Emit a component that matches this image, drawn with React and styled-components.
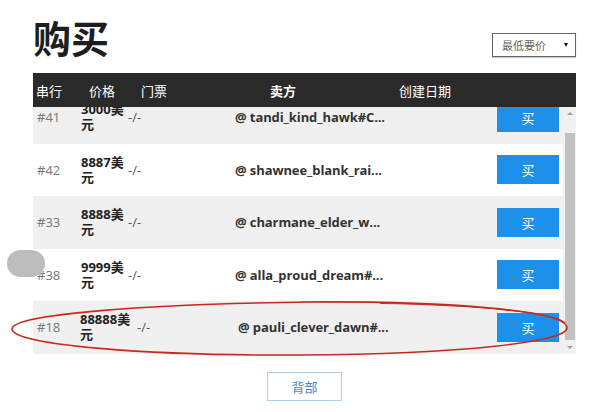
import React, { useLayoutEffect, useRef } from "react";
import styled, { createGlobalStyle } from "styled-components";

const Global = createGlobalStyle`
  html, body { margin: 0; padding: 0; background: #fff; }
  body { font-family: "Open Sans", "Noto Sans CJK SC", sans-serif; }
`;

const Page = styled.div`
  position: relative;
  width: 600px;
  height: 412px;
  overflow: hidden;
  box-sizing: border-box;
  padding: 14px 24px 0 33px;
`;

const TopBar = styled.div`
  display: flex;
  justify-content: space-between;
  align-items: flex-end;
  height: 46px;
  margin-bottom: 13px;
`;

const Title = styled.h1`
  margin: 0;
  font-family: "Noto Sans CJK SC", sans-serif;
  font-size: 38px;
  line-height: 46px;
  font-weight: 700;
  color: #1e1e1e;
`;

const SortSelect = styled.div`
  width: 84px;
  height: 24px;
  box-sizing: border-box;
  border: 1px solid #666;
  box-shadow: 0 1px 1px rgba(0, 0, 0, 0.2);
  display: flex;
  align-items: center;
  justify-content: space-between;
  padding: 0 7px 0 9px;
  margin-bottom: 3px;
  font-size: 11px;
  color: #666;
  font-family: "Noto Sans CJK SC", sans-serif;
`;

const Caret = styled.span`
  width: 0;
  height: 0;
  border-left: 2.5px solid transparent;
  border-right: 2.5px solid transparent;
  border-top: 4px solid #111;
`;

const HeaderBar = styled.div`
  height: 34px;
  background: #2a2a2a;
  color: #fff;
  display: flex;
  align-items: center;
  padding-left: 3px;
  font-size: 13px;
  font-family: "Noto Sans CJK SC", sans-serif;
`;

const HeadCell = styled.div`
  width: ${(p) => p.$w}px;
  text-align: ${(p) => p.$align || "left"};
  font-weight: ${(p) => (p.$bold ? 700 : 400)};
  flex: none;
`;

const Body = styled.div`
  display: flex;
  height: 247px;
  background: #fff;
`;

const List = styled.div`
  flex: 1;
  overflow: hidden;
`;

const Row = styled.div`
  height: 52.5px;
  box-sizing: border-box;
  display: flex;
  align-items: center;
  padding: 0 4px;
  background: ${(p) => (p.$alt ? "#f0f0f0" : "#fff")};
`;

const Rank = styled.div`
  width: ${(p) => p.$w}px;
  flex: none;
  font-size: 13px;
  color: #777;
`;

const Price = styled.div`
  width: ${(p) => p.$w}px;
  flex: none;
  font-size: 13px;
  line-height: 15px;
  font-weight: 700;
  color: #222;
  padding-right: 2px;
  box-sizing: border-box;
`;

const Ticket = styled.div`
  width: ${(p) => p.$w}px;
  flex: none;
  font-size: 13px;
  color: #555;
`;

const Seller = styled.div`
  font-size: 13px;
  font-weight: 700;
  color: #333;
  white-space: nowrap;
  letter-spacing: -0.1px;
`;

const BuyButton = styled.button`
  margin-left: auto;
  width: 62px;
  height: 29px;
  border: none;
  background: #1e90ea;
  color: #fff;
  font-size: 13px;
  font-family: "Noto Sans CJK SC", sans-serif;
  padding: 0;
`;

const ScrollCol = styled.div`
  width: 13px;
  flex: none;
  background: #f1f1f1;
  display: flex;
  flex-direction: column;
`;

const Arrow = styled.div`
  height: 13px;
  display: flex;
  align-items: center;
  justify-content: center;
  &::after {
    content: "";
    border-left: 3px solid transparent;
    border-right: 3px solid transparent;
    ${(p) =>
      p.$down
        ? "border-top: 3px solid #a0a0a0;"
        : "border-bottom: 3px solid #a0a0a0;"}
  }
`;

const Track = styled.div`
  flex: 1;
  padding-top: 13px;
`;

const Thumb = styled.div`
  width: 10px;
  height: 207px;
  margin-left: 2px;
  background: #c1c1c1;
`;

const Footer = styled.div`
  display: flex;
  justify-content: center;
  padding-top: 18px;
`;

const BackButton = styled.button`
  width: 75px;
  height: 29px;
  border: 1px solid #a9d2f0;
  background: #fff;
  color: #3c8dd5;
  font-size: 13px;
  font-family: "Noto Sans CJK SC", sans-serif;
  padding: 0;
`;

const Blob = styled.div`
  position: absolute;
  left: 7px;
  top: 250px;
  width: 38px;
  height: 27px;
  border-radius: 14px / 13px;
  background: #bdbdbd;
`;

const Overlay = styled.svg`
  position: absolute;
  left: 0;
  top: 0;
  pointer-events: none;
`;

const rows = [
  { rank: "#41", price: "3000美元", seller: "@ tandi_kind_hawk#C...", alt: true },
  { rank: "#42", price: "8887美元", seller: "@ shawnee_blank_rai...", alt: false },
  { rank: "#33", price: "8888美元", seller: "@ charmane_elder_w...", alt: true },
  { rank: "#38", price: "9999美元", seller: "@ alla_proud_dream#...", alt: false },
  { rank: "#18", price: "88888美元", seller: "@ pauli_clever_dawn#...", alt: true, wide: true },
];

export default function App() {
  const listRef = useRef(null);
  useLayoutEffect(() => {
    if (listRef.current) listRef.current.scrollTop = 9999;
  }, []);

  return (
    <Page>
      <Global />
      <TopBar>
        <Title>购买</Title>
        <SortSelect>
          <span>最低要价</span>
          <Caret />
        </SortSelect>
      </TopBar>
      <HeaderBar>
        <HeadCell $w={53}>串行</HeadCell>
        <HeadCell $w={52}>价格</HeadCell>
        <HeadCell $w={70}>门票</HeadCell>
        <HeadCell $w={144} $align="center" $bold>卖方</HeadCell>
        <HeadCell $w={140} $align="center">创建日期</HeadCell>
      </HeaderBar>
      <Body>
        <List ref={listRef}>
          {rows.map((r) => (
            <Row key={r.rank} $alt={r.alt}>
              <Rank $w={r.wide ? 43 : 44}>{r.rank}</Rank>
              <Price $w={r.wide ? 57 : 47}>{r.price}</Price>
              <Ticket $w={r.wide ? 101 : 107}>-/-</Ticket>
              <Seller>{r.seller}</Seller>
              <BuyButton>买</BuyButton>
            </Row>
          ))}
        </List>
        <ScrollCol>
          <Arrow />
          <Track>
            <Thumb />
          </Track>
          <Arrow $down />
        </ScrollCol>
      </Body>
      <Footer>
        <BackButton>背部</BackButton>
      </Footer>
      <Blob />
      <Overlay width="600" height="412" viewBox="0 0 600 412">
        <path
          d="M 300 302 C 450 301, 562 310, 567 327 C 571 342, 460 354, 300 355 C 150 356, 12 345, 12 329 C 12 314, 150 304, 310 302"
          fill="none"
          stroke="#c62a1f"
          strokeWidth="1.6"
        />
        <path
          d="M 380 303.5 C 480 305, 556 313, 565 323"
          fill="none"
          stroke="#c62a1f"
          strokeWidth="1.2"
        />
      </Overlay>
    </Page>
  );
}
